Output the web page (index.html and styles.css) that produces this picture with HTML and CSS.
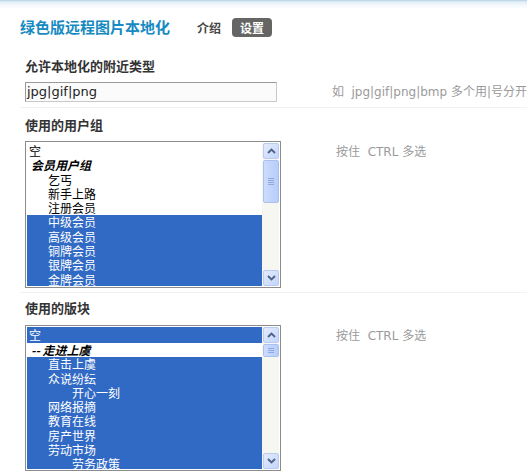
FILE: index.html
```html
<!DOCTYPE html>
<html lang="zh-CN">
<head>
<meta charset="utf-8">
<title>绿色版远程图片本地化</title>
<link rel="stylesheet" href="styles.css">
</head>
<body>
<div class="topbar"></div>
<div class="header">
  <span class="title">绿色版远程图片本地化</span>
  <a class="tab">介绍</a>
  <a class="tab active">设置</a>
</div>

<div class="row row1">
  <div class="label">允许本地化的附近类型</div>
  <div class="field center">
    <div class="input">jpg|gif|png</div>
    <div class="hint">如 &nbsp;jpg|gif|png|bmp 多个用|号分开</div>
  </div>
</div>

<div class="row row2">
  <div class="label">使用的用户组</div>
  <div class="field">
    <div class="listbox" role="listbox">
      <div class="items">
        <div class="opt l0">空</div>
        <div class="grp">会员用户组</div>
        <div class="opt l1">乞丐</div>
        <div class="opt l1">新手上路</div>
        <div class="opt l1">注册会员</div>
        <div class="opt l1 sel">中级会员</div>
        <div class="opt l1 sel">高级会员</div>
        <div class="opt l1 sel">铜牌会员</div>
        <div class="opt l1 sel">银牌会员</div>
        <div class="opt l1 sel">金牌会员</div>
      </div>
      <div class="sbar">
        <div class="sbtn"><svg width="9" height="6" viewBox="0 0 9 6"><polyline points="1,5 4.5,1.5 8,5" fill="none" stroke="#4d6185" stroke-width="1.8"/></svg></div>
        <div class="thumb big"><span></span><span></span><span></span><span></span></div>
        <div class="track"></div>
        <div class="sbtn"><svg width="9" height="6" viewBox="0 0 9 6"><polyline points="1,1 4.5,4.5 8,1" fill="none" stroke="#4d6185" stroke-width="1.8"/></svg></div>
      </div>
    </div>
    <div class="hint top">按住 &nbsp;CTRL 多选</div>
  </div>
</div>

<div class="row row3">
  <div class="label">使用的版块</div>
  <div class="field">
    <div class="listbox" role="listbox">
      <div class="items">
        <div class="opt l0 sel first">空</div>
        <div class="grp">-- 走进上虞</div>
        <div class="opt l1 sel">直击上虞</div>
        <div class="opt l1 sel">众说纷纭</div>
        <div class="opt l2 sel">开心一刻</div>
        <div class="opt l1 sel">网络报摘</div>
        <div class="opt l1 sel">教育在线</div>
        <div class="opt l1 sel">房产世界</div>
        <div class="opt l1 sel">劳动市场</div>
        <div class="opt l2 sel">劳务政策</div>
      </div>
      <div class="sbar">
        <div class="sbtn"><svg width="9" height="6" viewBox="0 0 9 6"><polyline points="1,5 4.5,1.5 8,5" fill="none" stroke="#4d6185" stroke-width="1.8"/></svg></div>
        <div class="thumb small"><span></span><span></span><span></span></div>
        <div class="track"></div>
        <div class="sbtn"><svg width="9" height="6" viewBox="0 0 9 6"><polyline points="1,1 4.5,4.5 8,1" fill="none" stroke="#4d6185" stroke-width="1.8"/></svg></div>
      </div>
    </div>
    <div class="hint top">按住 &nbsp;CTRL 多选</div>
  </div>
</div>
</body>
</html>
```

FILE: styles.css
```css
html, body {
  margin: 0;
  padding: 0;
  background: #fff;
  overflow: hidden;
}
body {
  font-family: "DejaVu Sans", "Noto Sans CJK SC", sans-serif;
  font-size: 12px;
  color: #333;
}
.topbar {
  height: 8px;
  background: linear-gradient(#a9c7da 0, #d6e8f4 1px, #eef6fb 4px, #fff 9px);
}
.header {
  display: flex;
  align-items: center;
  padding: 9px 20px 0;
  height: 20px;
}
.title {
  font-family: "Noto Sans CJK SC", sans-serif;
  font-size: 15px;
  font-weight: bold;
  color: #178ac2;
  line-height: 20px;
  margin-right: 27px;
}
.tab {
  font-family: "Noto Sans CJK SC", sans-serif;
  font-size: 12px;
  font-weight: bold;
  color: #444;
  line-height: 19px;
  margin-right: 11px;
}
.tab.active {
  background: #656565;
  color: #fff;
  border-radius: 4px;
  padding: 0 8px;
}
.row {
  margin-left: 20px;
  padding-left: 5px;
  border-bottom: 1px solid #f2f2f2;
}
.row1 { padding-top: 21px; padding-bottom: 5px; margin-top: 0; }
.row2 { padding-top: 9px; padding-bottom: 4px; }
.row3 { padding-top: 7px; border-bottom: none; }
.label {
  font-family: "Noto Sans CJK SC", sans-serif;
  font-size: 13px;
  font-weight: bold;
  color: #333;
  line-height: 16px;
}
.row1 .label { margin-bottom: 8px; }
.row2 .label { margin-bottom: 8px; }
.row3 .label { margin-bottom: 9px; }
.field {
  display: flex;
  align-items: flex-start;
}
.field.center { align-items: center; }
.input {
  box-sizing: border-box;
  width: 256px;
  height: 20px;
  border: 1px solid #9a9a9a;
  border-right-color: #c8c8c8;
  border-bottom-color: #c8c8c8;
  background: #fbfbfb;
  font-family: "DejaVu Sans", sans-serif;
  font-size: 13px;
  line-height: 18px;
  padding-left: 1px;
  color: #222;
}
.hint {
  margin-left: 55px;
  color: #9a9a9a;
  font-size: 12px;
  line-height: 16px;
  white-space: nowrap;
}
.hint.top { margin-top: 3px; }
.listbox {
  box-sizing: border-box;
  width: 256px;
  height: 147px;
  border: 1px solid #8c8c8c;
  padding: 1px;
  display: flex;
  background: #fff;
  flex: none;
}
.row3 .listbox { height: 146px; }
.items {
  flex: 1;
  overflow: hidden;
  padding-top: 1px;
  font-family: "Noto Sans CJK SC", sans-serif;
  font-size: 12px;
  color: #000;
}
.opt, .grp {
  height: 14.3px;
  line-height: 14px;
  white-space: nowrap;
}
.grp {
  font-weight: bold;
  font-style: italic;
  padding-left: 4px;
}
.opt.l0 { padding-left: 2px; }
.opt.l1 { padding-left: 21px; }
.opt.l2 { padding-left: 45px; }
.opt.sel {
  background: #316ac5;
  color: #fff;
}
.opt.first { margin-top: -1px; height: 16px; line-height: 15px; }
.sbar {
  width: 17px;
  display: flex;
  flex-direction: column;
  background: #f7f7f1;
}
.sbtn {
  box-sizing: border-box;
  height: 16px;
  margin: 0 0 0 1px;
  border: 1px solid #b9cbf3;
  border-radius: 2px;
  background: linear-gradient(135deg, #e4ecfd, #c3d5fb);
  display: flex;
  align-items: center;
  justify-content: center;
}
.thumb {
  box-sizing: border-box;
  margin: 1px 0 0 1px;
  border: 1px solid #a9c0f2;
  border-radius: 2px;
  background: linear-gradient(90deg, #cddcfc, #c1d4fb 50%, #b8cdf9);
  display: flex;
  flex-direction: column;
  align-items: center;
  justify-content: center;
  gap: 1px;
}
.thumb span {
  width: 6px;
  height: 1px;
  background: #8fa9e0;
}
.thumb.big { height: 43px; }
.thumb.small { height: 13px; }
.track { flex: 1; }
```
